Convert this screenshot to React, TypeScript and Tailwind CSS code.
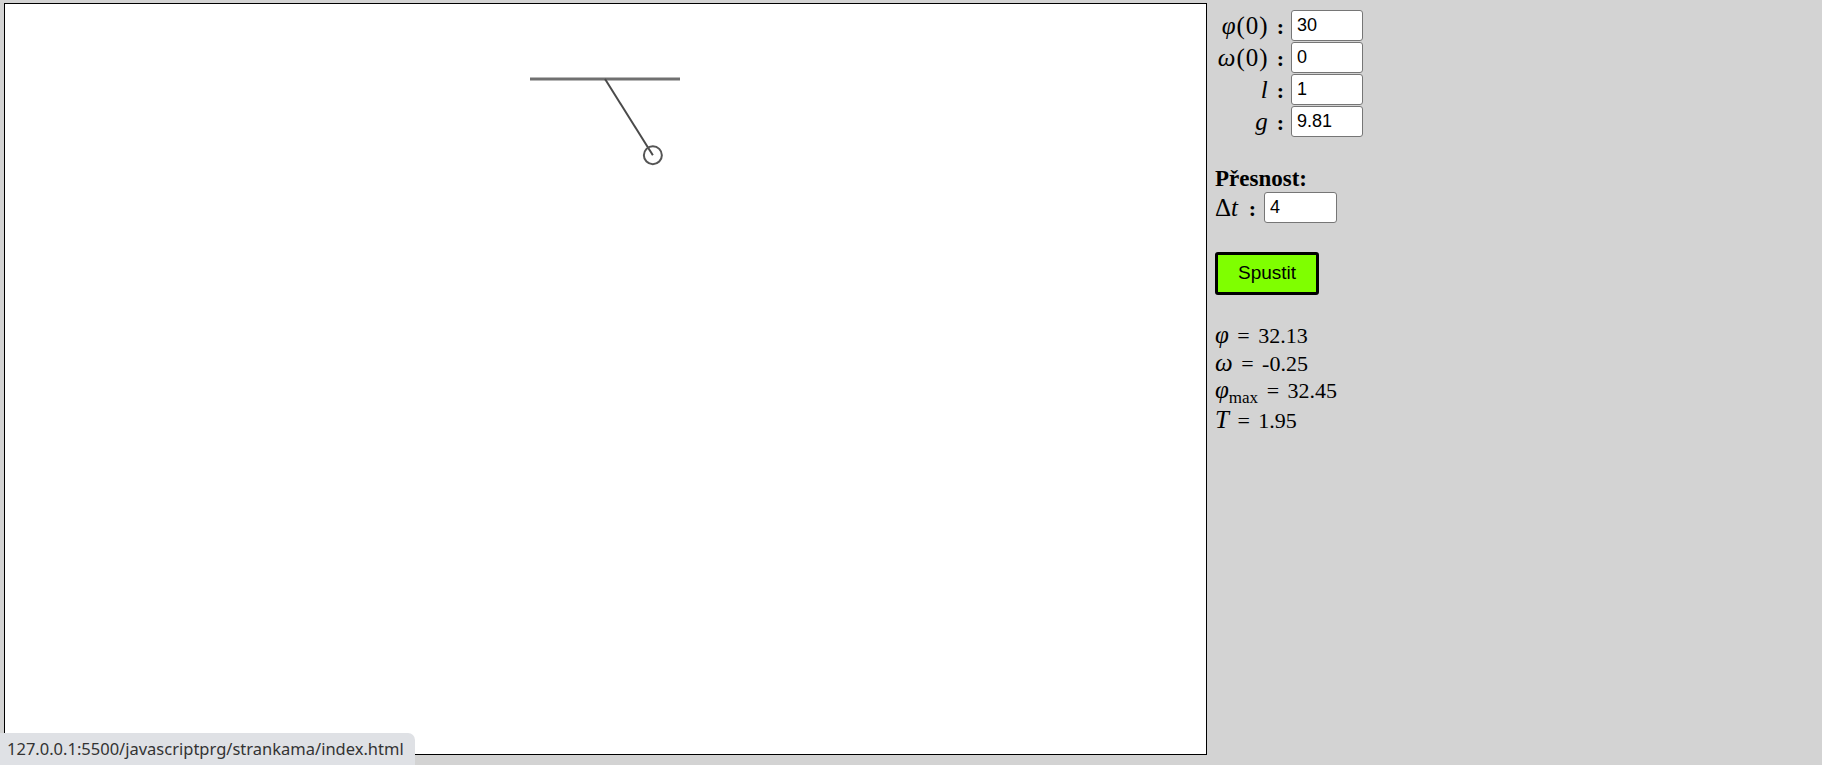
import React from 'react';

const inputCls =
  "w-[72px] h-[31px] bg-white border border-[#767676] rounded-[3px] px-[5px] text-[18px] text-black font-['Liberation_Sans',Arial,sans-serif] outline-none";

function Pendulum() {
  const px = 600;
  const py = 75;
  const len = 90;
  const phi = (32.13 * Math.PI) / 180;
  const bx = px + len * Math.sin(phi);
  const by = py + len * Math.cos(phi);
  return (
    <svg width="1200" height="749" className="block">
      <line x1={525} y1={py} x2={675} y2={py} stroke="#707070" strokeWidth={3} />
      <line x1={px} y1={py} x2={bx} y2={by} stroke="#4a4a4a" strokeWidth={2} />
      <circle cx={bx} cy={by} r={9} fill="none" stroke="#555" strokeWidth={2} />
    </svg>
  );
}

function Eq() {
  return <span className="px-[3px]"> = </span>;
}

export default function App() {
  const params = [
    { label: <><i>φ</i>(0)</>, value: '30' },
    { label: <><i>ω</i>(0)</>, value: '0' },
    { label: <i>l</i>, value: '1' },
    { label: <i>g</i>, value: '9.81' },
  ];

  return (
    <div className="min-h-screen bg-[#d3d3d3] relative font-['Liberation_Serif','Times_New_Roman',serif] text-black">
      <div className="flex items-start pt-[3px] pl-[4px]">
        <div className="w-[1203px] h-[752px] border-[1.5px] border-black bg-white shrink-0 overflow-hidden">
          <Pendulum />
        </div>

        <div className="ml-[8px] pt-[7px]">
          <div className="grid grid-cols-[72px_72px] gap-x-[4px] gap-y-[1px] items-center">
            {params.map((p, i) => (
              <React.Fragment key={i}>
                <span className="flex justify-end items-baseline pr-[2px] text-[25px] leading-none tracking-[1px] whitespace-nowrap">
                  <span>{p.label}</span>
                  <span className="ml-[8px] font-bold text-[22px]">:</span>
                </span>
                <input className={inputCls} defaultValue={p.value} />
              </React.Fragment>
            ))}
          </div>

          <div className="mt-[29px] text-[23px] leading-[26px] font-bold">Přesnost:</div>
          <div className="flex items-center">
            <span className="w-[45px] flex justify-between items-baseline pr-[4px] text-[25px] leading-none whitespace-nowrap">
              <span>
                Δ<i>t</i>
              </span>
              <span className="font-bold text-[22px]">:</span>
            </span>
            <input className={inputCls + ' ml-[4px] w-[73px]'} defaultValue="4" />
          </div>

          <button className="mt-[29px] w-[104px] h-[43px] border-[3px] border-black rounded-[3px] bg-[#7fff00] text-[19px] font-['Liberation_Sans',Arial,sans-serif]">
            Spustit
          </button>

          <div className="mt-[27px] text-[22px] leading-[26.7px] whitespace-nowrap">
            <div><i className="text-[25px]">φ</i><Eq />32.13</div>
            <div><i className="text-[25px]">ω</i><Eq />-0.25</div>
            <div>
              <i className="text-[25px]">φ</i>
              <span className="relative top-[5px] text-[17px]">max</span><Eq />32.45
            </div>
            <div><i className="text-[25px]">T</i><Eq />1.95</div>
          </div>
        </div>
      </div>

      <div className="absolute left-0 bottom-0 h-[32px] w-[415px] bg-[#dfe1e5] rounded-tr-[7px] pl-[7px] flex items-center text-[16.5px] text-[#333] font-['Noto_Sans',sans-serif]">
        127.0.0.1:5500/javascriptprg/strankama/index.html
      </div>
    </div>
  );
}
